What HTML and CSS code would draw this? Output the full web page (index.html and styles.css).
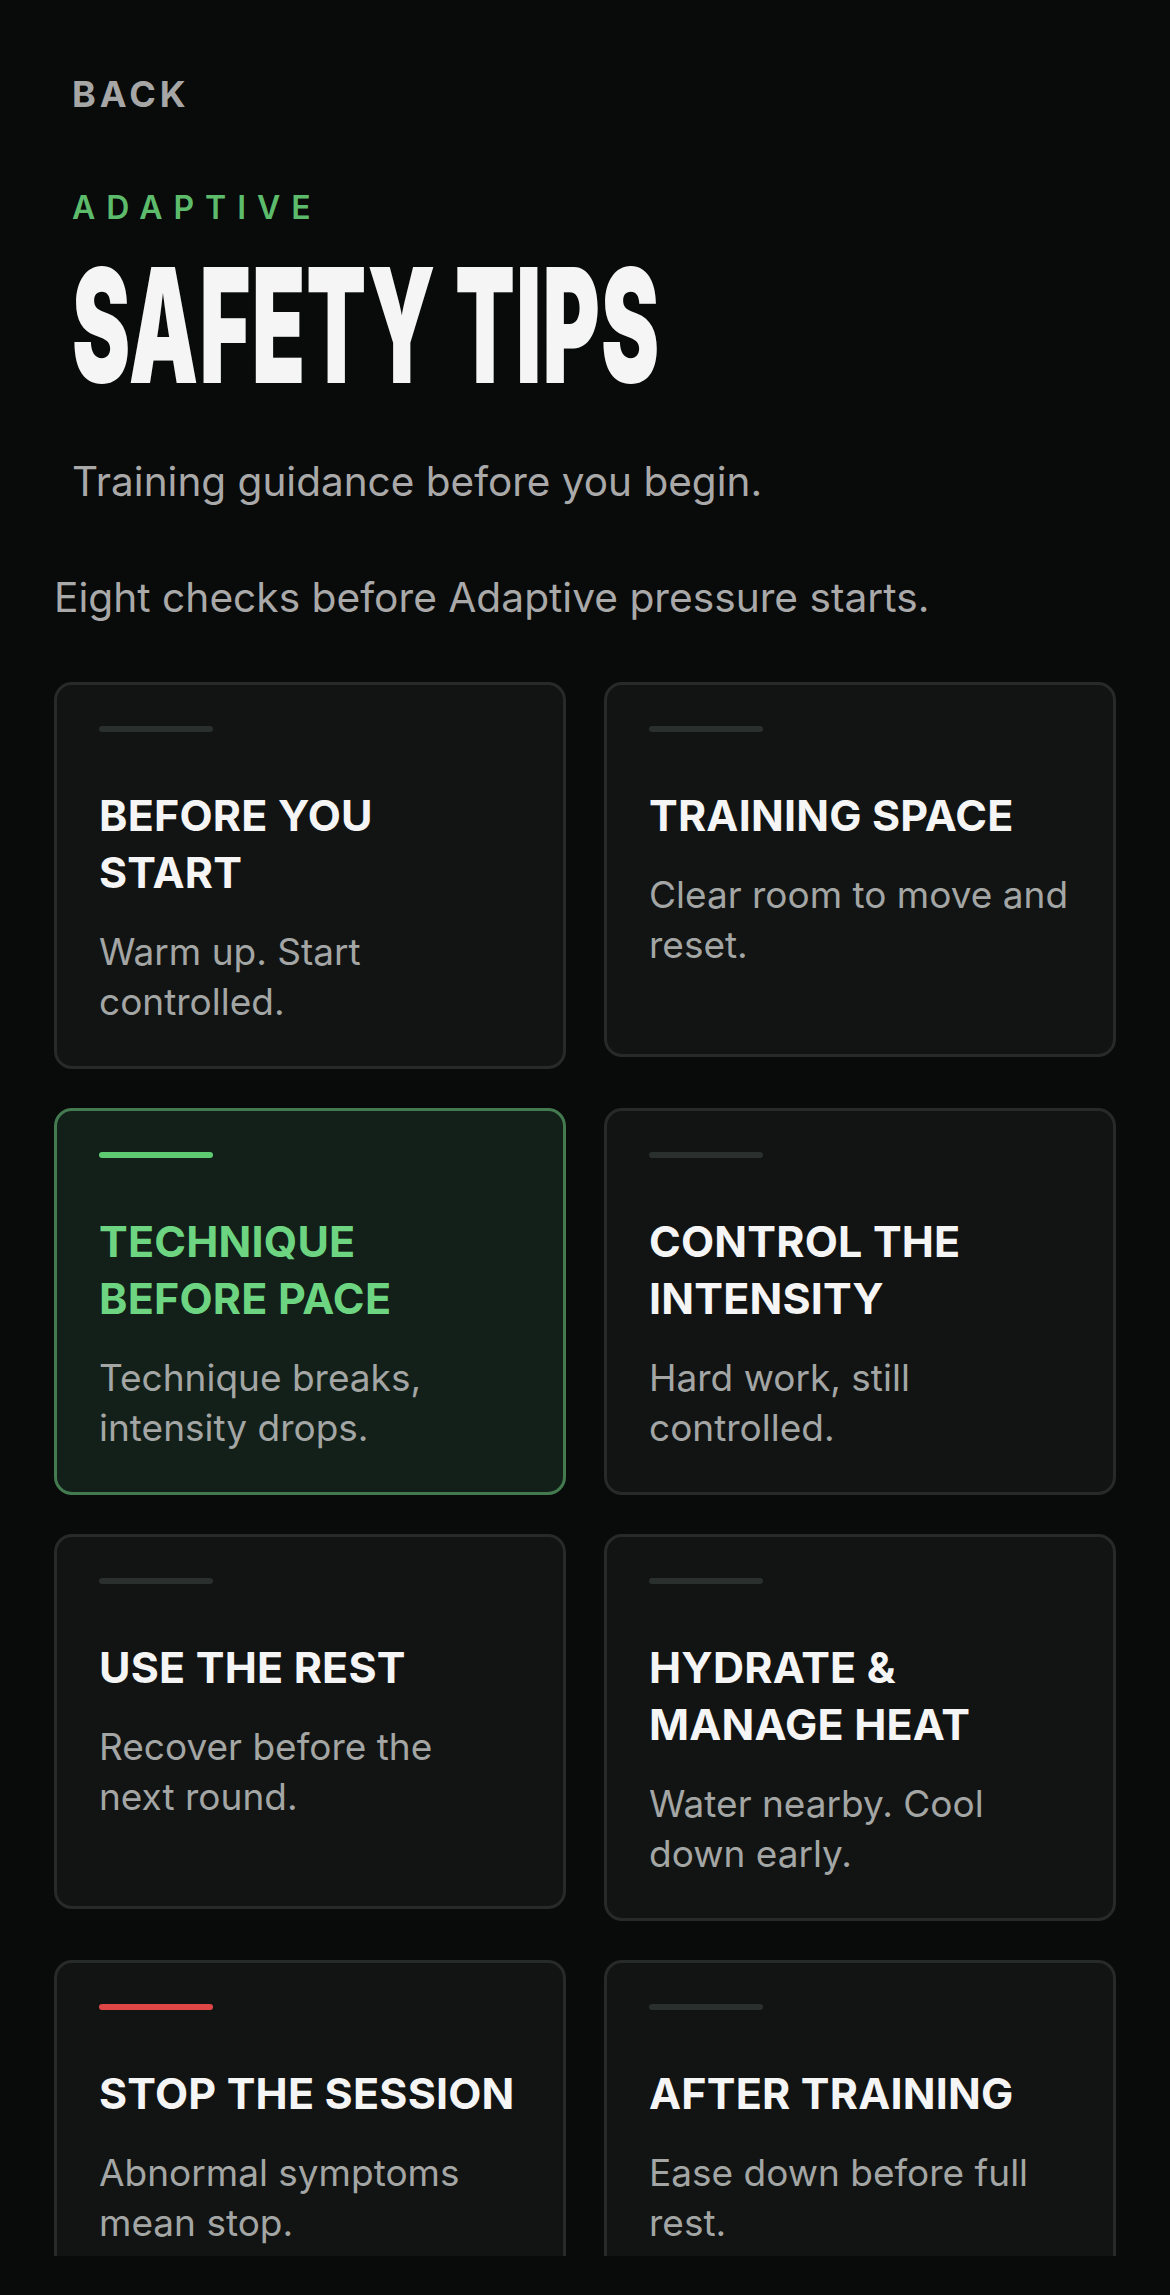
FILE: index.html
```html
<!DOCTYPE html>
<html lang="en">
<head>
<meta charset="utf-8">
<title>Safety Tips</title>
<link rel="stylesheet" href="styles.css">
</head>
<body>
<div class="screen">
  <header class="hero">
    <a class="back">BACK</a>
    <p class="eyebrow">ADAPTIVE</p>
    <h1 class="title"><span class="title-text">SAFETY TIPS</span></h1>
    <p class="lede">Training guidance before you begin.</p>
  </header>
  <p class="intro">Eight checks before Adaptive pressure starts.</p>
  <section class="grid">
    <article class="card">
      <span class="bar"></span>
      <h2 class="card-title">BEFORE YOU START</h2>
      <p class="card-text">Warm up. Start controlled.</p>
    </article>
    <article class="card">
      <span class="bar"></span>
      <h2 class="card-title">TRAINING SPACE</h2>
      <p class="card-text">Clear room to move and reset.</p>
    </article>
    <article class="card card-active">
      <span class="bar"></span>
      <h2 class="card-title">TECHNIQUE BEFORE PACE</h2>
      <p class="card-text">Technique breaks, intensity drops.</p>
    </article>
    <article class="card">
      <span class="bar"></span>
      <h2 class="card-title">CONTROL THE INTENSITY</h2>
      <p class="card-text">Hard work, still controlled.</p>
    </article>
    <article class="card">
      <span class="bar"></span>
      <h2 class="card-title">USE THE REST</h2>
      <p class="card-text">Recover before the next&nbsp;round.</p>
    </article>
    <article class="card">
      <span class="bar"></span>
      <h2 class="card-title">HYDRATE &amp; MANAGE HEAT</h2>
      <p class="card-text">Water nearby. Cool down early.</p>
    </article>
    <article class="card card-danger">
      <span class="bar"></span>
      <h2 class="card-title">STOP THE SESSION</h2>
      <p class="card-text">Abnormal symptoms mean stop.</p>
    </article>
    <article class="card">
      <span class="bar"></span>
      <h2 class="card-title">AFTER TRAINING</h2>
      <p class="card-text">Ease down before full rest.</p>
    </article>
  </section>
</div>
</body>
</html>
```
FILE: styles.css
```css
html, body {
  margin: 0;
  padding: 0;
  background: #090a0a;
}

body {
  font-family: Inter, "Noto Sans", "Liberation Sans", sans-serif;
  color: #f4f4f4;
}

.screen {
  box-sizing: border-box;
  height: 2256px;
  overflow: hidden;
  padding: 0 54px;
}

.hero {
  padding: 72px 18px 0;
}

.back {
  display: block;
  font-size: 36px;
  line-height: 44px;
  font-weight: 700;
  letter-spacing: 4px;
  color: #a6a6a6;
}

.eyebrow {
  margin: 72px 0 0;
  font-size: 32px;
  line-height: 40px;
  font-weight: 600;
  letter-spacing: 11px;
  color: #5dbb6c;
}

.title {
  margin: 18px 0 0;
  font-size: 159px;
  line-height: 159px;
  font-weight: 900;
  color: #f5f5f5;
  white-space: nowrap;
}

.title-text {
  display: inline-block;
  transform: scaleX(0.55);
  transform-origin: left center;
  letter-spacing: 2px;
}

.lede {
  margin: 49px 0 0;
  font-size: 40.5px;
  line-height: 56px;
  color: #a9a9a9;
}

.intro {
  margin: 60px 0 0;
  font-size: 40.7px;
  line-height: 56px;
  color: #a9a9a9;
}

.grid {
  margin-top: 56px;
  display: grid;
  grid-template-columns: 1fr 1fr;
  column-gap: 38px;
  row-gap: 39px;
  align-items: start;
}

.card {
  box-sizing: border-box;
  min-height: 375px;
  padding: 41px 42px 39px;
  border: 3px solid #262a28;
  border-radius: 18px;
  background: #121413;
}

.bar {
  display: block;
  width: 114px;
  height: 6px;
  border-radius: 3px;
  background: #2a302d;
}

.card-title {
  margin: 55px 0 0;
  font-size: 43px;
  line-height: 57px;
  font-weight: 700;
  letter-spacing: 0.2px;
  color: #f5f5f5;
}

.card-text {
  margin: 26px 0 0;
  font-size: 37px;
  line-height: 50px;
  color: #a3a6a4;
}

.card-active {
  background: #132019;
  border-color: #437a4f;
}

.card-active .bar {
  background: #5ecb72;
}

.card-active .card-title {
  color: #6dd581;
}

.card-danger .bar {
  background: #e04646;
}
```
